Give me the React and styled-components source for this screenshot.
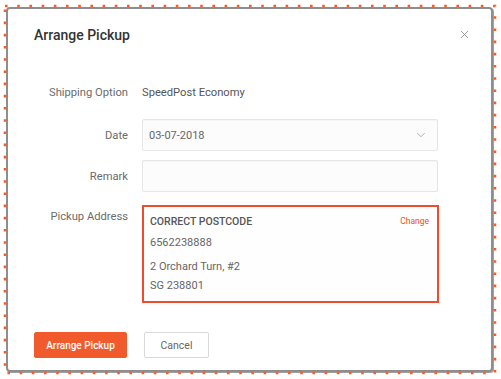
import React from "react";
import styled, { createGlobalStyle } from "styled-components";
import { ChevronDown, X } from "lucide-react";

const Global = createGlobalStyle`
  html, body { margin: 0; padding: 0; background: #ffffff; }
  body { font-family: Roboto, "Noto Sans", Arial, sans-serif; width: 501px; height: 379px; overflow: hidden; }
  * { box-sizing: border-box; }
`;

const Page = styled.div`
  position: relative;
  width: 501px;
  height: 379px;
  padding: 7px 0 0 6px;
`;

const Dialog = styled.div`
  width: 487px;
  height: 365px;
  background: #fff;
  border: 2px solid #8e8e8e;
  border-radius: 4px;
  box-shadow: 1px 1px 0 #a0a0a0;
  display: flex;
  flex-direction: column;
  padding: 0 26px;
`;

const Header = styled.div`
  display: flex;
  align-items: center;
  justify-content: space-between;
  height: 48px;
  padding-top: 3px;
`;

const Title = styled.h1`
  margin: 0;
  font-size: 14px;
  font-weight: 500;
  color: #333;
`;

const Close = styled.button`
  border: 0;
  background: none;
  padding: 0;
  margin-right: -6px;
  display: flex;
  color: #8c8c8c;
`;

const Form = styled.div`
  display: flex;
  flex-direction: column;
  margin-top: 19px;
`;

const Row = styled.div`
  display: grid;
  grid-template-columns: 94px 296px;
  column-gap: 14px;
  align-items: ${(p) => (p.$top ? "start" : "center")};
  min-height: 32px;
  margin-top: ${(p) => p.$mt || 0}px;
`;

const Label = styled.div`
  text-align: right;
  font-size: 11.2px;
  color: #6b6b6b;
  padding-top: ${(p) => (p.$top ? "5px" : 0)};
`;

const Value = styled.div`
  font-size: 11.2px;
  color: #555;
`;

const Input = styled.div`
  height: 32px;
  border: 1px solid #e6e6e6;
  border-radius: 2px;
  background: #fcfcfc;
  box-shadow: inset 0 1px 1px rgba(0, 0, 0, 0.03);
  display: flex;
  align-items: center;
  justify-content: space-between;
  padding: 0 9px 0 6px;
  font-size: 11px;
  color: #666;
`;

const Address = styled.div`
  height: 98px;
  width: 297px;
  border: 2px solid #ee4d2d;
  background: #fefefe;
  padding: 4px 8px 0 6px;
`;

const AddrHead = styled.div`
  display: flex;
  justify-content: space-between;
  align-items: center;
  height: 20px;
`;

const AddrName = styled.div`
  font-size: 10.5px;
  font-weight: 500;
  color: #555;
`;

const Change = styled.span`
  font-size: 8.5px;
  color: #ee4d2d;
`;

const AddrLine = styled.div`
  font-size: 11px;
  color: #666;
  line-height: ${(p) => p.$lh || 20}px;
  margin-top: ${(p) => p.$mt || 0}px;
`;

const Footer = styled.div`
  display: flex;
  gap: 17px;
  margin-top: auto;
  margin-bottom: 12px;
`;

const Button = styled.button`
  height: 26px;
  width: ${(p) => p.$w}px;
  border-radius: 2px;
  font-family: Roboto, Arial, sans-serif;
  font-size: ${(p) => (p.$primary ? 10 : 10.5)}px;
  font-weight: ${(p) => (p.$primary ? 500 : 400)};
  color: ${(p) => (p.$primary ? "#fff" : "#666")};
  background: ${(p) => (p.$primary ? "#f05a2c" : "#fff")};
  border: 1px solid ${(p) => (p.$primary ? "#f05a2c" : "#d9d9d9")};
  padding: 0;
`;

const Dots = styled.svg`
  position: absolute;
  left: 0;
  top: 0;
  pointer-events: none;
`;

export default function App() {
  return (
    <>
      <Global />
      <Page>
        <Dialog>
          <Header>
            <Title>Arrange Pickup</Title>
            <Close aria-label="close">
              <X size={13} strokeWidth={1.6} />
            </Close>
          </Header>
          <Form>
            <Row>
              <Label>Shipping Option</Label>
              <Value>SpeedPost Economy</Value>
            </Row>
            <Row $mt={11}>
              <Label>Date</Label>
              <Input>
                <span>03-07-2018</span>
                <ChevronDown size={14} strokeWidth={1.3} color="#999" />
              </Input>
            </Row>
            <Row $mt={9}>
              <Label>Remark</Label>
              <Input />
            </Row>
            <Row $mt={13} $top>
              <Label $top>Pickup Address</Label>
              <Address>
                <AddrHead>
                  <AddrName>CORRECT POSTCODE</AddrName>
                  <Change>Change</Change>
                </AddrHead>
                <AddrLine $mt={2}>6562238888</AddrLine>
                <AddrLine $mt={4} $lh={19}>2 Orchard Turn, #2</AddrLine>
                <AddrLine $lh={19}>SG 238801</AddrLine>
              </Address>
            </Row>
          </Form>
          <Footer>
            <Button $primary $w={93}>Arrange Pickup</Button>
            <Button $w={65}>Cancel</Button>
          </Footer>
        </Dialog>
        <Dots width="501" height="379">
          <rect x="5" y="6" width="490" height="367" fill="none" stroke="#ff5a24" strokeWidth="2.6" strokeDasharray="2.6 9.6" />
        </Dots>
      </Page>
    </>
  );
}
